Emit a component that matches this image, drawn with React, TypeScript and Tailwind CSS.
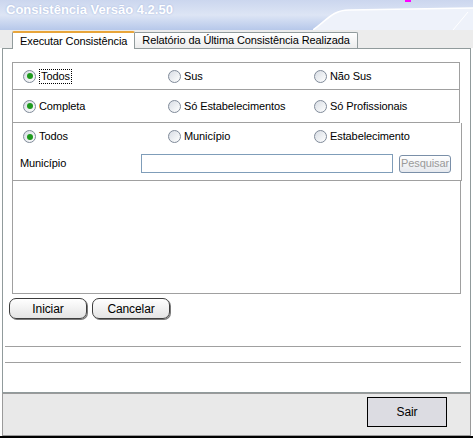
import React from "react";

const font = { fontFamily: '"Liberation Sans", Arial, sans-serif' };

function Radio({ label, checked, focus }: { label: string; checked?: boolean; focus?: boolean }) {
  return (
    <div className="flex items-center gap-[3px]">
      <span className="w-[13px] h-[13px] rounded-full border border-[#7f8a99] bg-gradient-to-br from-[#d8dde4] to-[#ffffff] flex items-center justify-center">
        {checked && <span className="w-[6px] h-[6px] rounded-full bg-[#1e9a1e]" />}
      </span>
      <span className={focus ? "border border-dotted border-black px-[1px] leading-[13px]" : "leading-[13px]"}>{label}</span>
    </div>
  );
}

function RoundButton({ label }: { label: string }) {
  return (
    <button className="w-[78px] h-[21px] rounded-[7px] border border-[#3d3d3d] bg-gradient-to-b from-[#ffffff] to-[#e4e4e4] shadow-[1px_1px_0_#7a7a7a] text-[12px] text-black leading-none">
      {label}
    </button>
  );
}

export default function App() {
  return (
    <div className="w-[473px] h-[438px] flex flex-col bg-white text-[11px] tracking-[-0.1px] text-black overflow-hidden" style={font}>
      {/* title bar */}
      <div className="relative h-[30px] bg-gradient-to-b from-[#cbd6ee] via-[#dde5f5] to-[#b7c8ea] shrink-0">
        <div className="absolute left-[6px] top-[2px] text-[13px] font-bold text-white leading-[16px] tracking-normal [text-shadow:0_0_2px_#9fb2dc]">
          Consistência Versão 4.2.50
        </div>
        <svg className="absolute right-0 top-0" width="160" height="30" viewBox="0 0 160 30">
          <path d="M0 30 C 14 20, 20 10, 36 10 L 160 8 L 160 30 Z" fill="#eef2fa" />
          <path d="M0 30 C 14 20, 20 10, 36 10 L 160 8" fill="none" stroke="#ffffff" strokeWidth="1.5" />
          <path d="M140 30 L 155 12" stroke="#ffffff" strokeWidth="1" />
          <rect x="92" y="0" width="6" height="2" fill="#ff00ff" />
        </svg>
      </div>

      {/* tabs */}
      <div className="h-[18px] bg-[#ececec] flex items-end pl-[12px] shrink-0">
        <div className="h-[18px] px-[7px] flex items-center bg-white border border-b-0 border-[#919b9c] border-t-2 border-t-[#e8a53a] rounded-t-[2px] relative z-10 -mb-px">
          Executar Consistência
        </div>
        <div className="h-[16px] px-[7px] flex items-center bg-gradient-to-b from-[#ffffff] to-[#ececec] border border-b-0 border-l-0 border-[#919b9c] rounded-tr-[2px]">
          Relatório da Última Consistência Realizada
        </div>
      </div>

      {/* panel */}
      <div className="flex-1 mx-[2px] border border-[#919b9c] bg-white flex flex-col px-[9px] pt-[13px]">
        <div className="border border-[#a0a0a0] w-[448px]">
          <div className="h-[26px] grid grid-cols-[145px_146px_1fr] items-center pl-[10px]">
            <Radio label="Todos" checked focus />
            <Radio label="Sus" />
            <Radio label="Não Sus" />
          </div>
          <div className="h-[33px] border-t border-[#a0a0a0] grid grid-cols-[145px_146px_1fr] items-center pl-[10px]">
            <Radio label="Completa" checked />
            <Radio label="Só Estabelecimentos" />
            <Radio label="Só Profissionais" />
          </div>
        </div>
        <div className="border border-t-0 border-[#a0a0a0] w-[450px] h-[58px] flex flex-col">
          <div className="h-[27px] grid grid-cols-[145px_146px_1fr] items-center pl-[10px]">
            <Radio label="Todos" checked />
            <Radio label="Município" />
            <Radio label="Estabelecimento" />
          </div>
          <div className="flex items-center mt-[4px] pl-[7px]">
            <span className="w-[121px]">Município</span>
            <div className="w-[252px] h-[19px] border border-[#7f9db9] bg-white" />
            <button className="ml-[6px] w-[52px] h-[18px] rounded-[3px] border border-[#7a8fa8] bg-gradient-to-b from-[#ffffff] to-[#e6e9ee] text-[#9a9a9a] text-[11px] leading-none">
              Pesquisar
            </button>
          </div>
        </div>
        <div className="border border-t-0 border-[#a0a0a0] w-[449px] h-[113px]" />
        <div className="flex gap-[5px] -ml-[3px] mt-[4px]">
          <RoundButton label="Iniciar" />
          <RoundButton label="Cancelar" />
        </div>
        <div className="-ml-[7px] w-[456px] border-t border-[#a0a0a0] mt-[27px]" />
        <div className="-ml-[7px] w-[456px] border-t border-[#a0a0a0] mt-[15px]" />
      </div>

      {/* bottom bar */}
      <div className="h-[43px] mx-[2px] bg-[#e9e9e9] border border-[#9a9a9a] flex items-start justify-end pr-[23px] pt-[3px] shrink-0">
        <button className="w-[80px] h-[30px] border border-black bg-[#dcdce2] text-[12px] leading-none">
          Sair
        </button>
      </div>
      <div className="h-[2px] bg-black shrink-0" />
    </div>
  );
}
